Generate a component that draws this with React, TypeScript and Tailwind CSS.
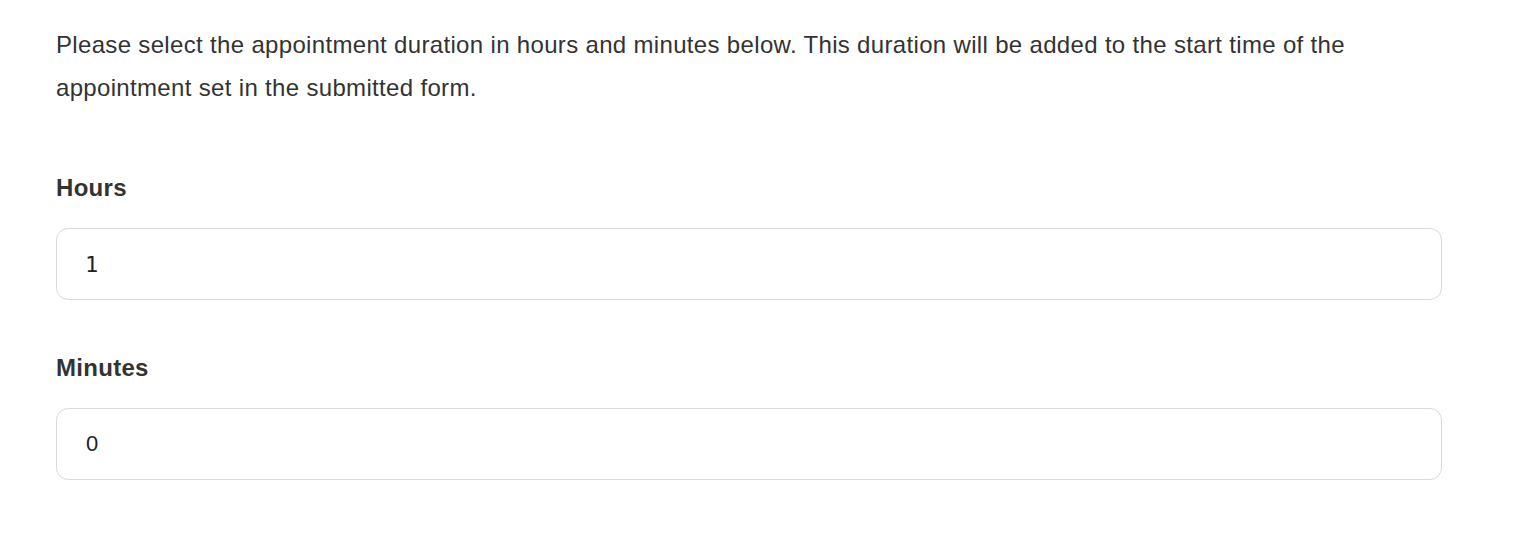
import React, { useState } from "react";

export default function App() {
  const [hours, setHours] = useState("1");
  const [minutes, setMinutes] = useState("0");

  return (
    <div className="w-full min-h-[554px] bg-white text-[#333333] font-['Liberation_Sans',Arial,sans-serif]">
      <div className="pl-[56px] pr-[86px] pt-[23px]">
        {/* Intro text */}
        <p className="text-[24px] leading-[43px] tracking-[0.33px]">
          Please select the appointment duration in hours and minutes below. This duration will be added to the start time of the
          <br />
          appointment set in the submitted form.
        </p>

        {/* Hours */}
        <div className="mt-[65px]">
          <label className="block text-[24px] leading-[28px] font-bold tracking-[0.3px]">Hours</label>
          <input
            value={hours}
            onChange={(e) => setHours(e.target.value)}
            className="mt-[26px] w-full h-[72px] rounded-[12px] border border-[#d9d9d9] px-[28px] text-[22px] text-[#222] font-['DejaVu_Sans_Mono',monospace] outline-none"
          />
        </div>

        {/* Minutes */}
        <div className="mt-[54px]">
          <label className="block text-[24px] leading-[28px] font-bold tracking-[0.3px]">Minutes</label>
          <input
            value={minutes}
            onChange={(e) => setMinutes(e.target.value)}
            className="mt-[26px] w-full h-[72px] rounded-[12px] border border-[#d9d9d9] px-[29px] text-[22px] text-[#222] outline-none"
          />
        </div>
      </div>
    </div>
  );
}
